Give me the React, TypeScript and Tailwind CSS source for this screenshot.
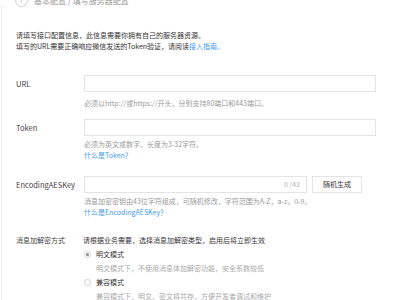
const font = { fontFamily: '"Noto Sans CJK SC", "Liberation Sans", sans-serif' };

const Field = ({ label, children }: { label: string; children: React.ReactNode }) => (
  <div className="flex">
    <div className="w-[68px] shrink-0 pt-[3px] text-[7.5px] text-[#444]">{label}</div>
    <div className="flex-1">{children}</div>
  </div>
);

const App = () => {
  return (
    <div className="relative h-[300px] w-[400px] overflow-hidden bg-white text-[7px] leading-[11px]" style={font}>
      <div className="absolute left-[1px] top-[5px] bottom-0 w-px bg-[#ececec]" />

      <div className="mt-[-7px] flex h-[14px] items-center pl-[15px] text-[#9a9a9a]">
        <span className="flex h-[13px] w-[13px] items-center justify-center rounded-full border border-[#cfcfcf] text-[7px]">‹</span>
        <span className="ml-[6px] text-[8px]">基本配置 / 填写服务器配置</span>
      </div>

      <div className="mt-[23px] pl-[16px] text-[#353535]">
        <p>请填写接口配置信息，此信息需要你拥有自己的服务器资源。</p>
        <p>
          填写的URL需要正确响应微信发送的Token验证，请阅读<span className="text-[#459ae9]">接入指南。</span>
        </p>
      </div>

      <div className="mt-[23px] flex flex-col gap-[10px] pl-[16px] pr-[24px]">
        <Field label="URL">
          <div className="h-[17px] w-full border border-[#e4e4e4]" />
          <p className="mt-[6px] text-[#9a9a9a]">必须以http://或https://开头，分别支持80端口和443端口。</p>
        </Field>

        <div className="mb-[5px]">
          <Field label="Token">
            <div className="h-[17px] w-full border border-[#e4e4e4]" />
            <p className="mt-[3px] text-[#9a9a9a]">必须为英文或数字，长度为3-32字符。</p>
            <p className="text-[#459ae9]">什么是Token？</p>
          </Field>
        </div>

        <Field label="EncodingAESKey">
          <div className="flex gap-[5px] pr-[14px]">
            <div className="flex h-[17px] flex-1 items-center justify-end border border-[#e4e4e4] pr-[6px] text-[#b0b0b0]">0 /43</div>
            <div className="flex h-[17px] w-[50px] items-center justify-center border border-[#e4e4e4] text-[#353535]">随机生成</div>
          </div>
          <p className="mt-[3px] text-[#9a9a9a]">消息加密密钥由43位字符组成，可随机修改，字符范围为A-Z，a-z，0-9。</p>
          <p className="text-[#459ae9]">什么是EncodingAESKey？</p>
        </Field>
      </div>

      <div className="mt-[17px] flex pl-[16px]">
        <div className="w-[67px] shrink-0 text-[#444]">消息加解密方式</div>
        <div className="flex flex-col gap-[3px] text-[#353535]">
          <p>请根据业务需要，选择消息加解密类型，启用后将立即生效</p>
          <div className="flex h-[11px] items-center gap-[5px] pl-[1px]">
            <span className="flex h-[7px] w-[7px] items-center justify-center rounded-full border border-[#cfcfcf]">
              <span className="h-[3px] w-[3px] rounded-full bg-[#888]" />
            </span>
            <span>明文模式</span>
          </div>
          <p className="pl-[13px] text-[#aaa]">明文模式下，不使用消息体加解密功能，安全系数较低</p>
          <div className="flex h-[11px] items-center gap-[5px] pl-[1px]">
            <span className="h-[7px] w-[7px] rounded-full border border-[#cfcfcf]" />
            <span>兼容模式</span>
          </div>
          <p className="pl-[13px] text-[#aaa]">兼容模式下，明文、密文将共存，方便开发者调试和维护</p>
        </div>
      </div>
    </div>
  );
};

export default App;
